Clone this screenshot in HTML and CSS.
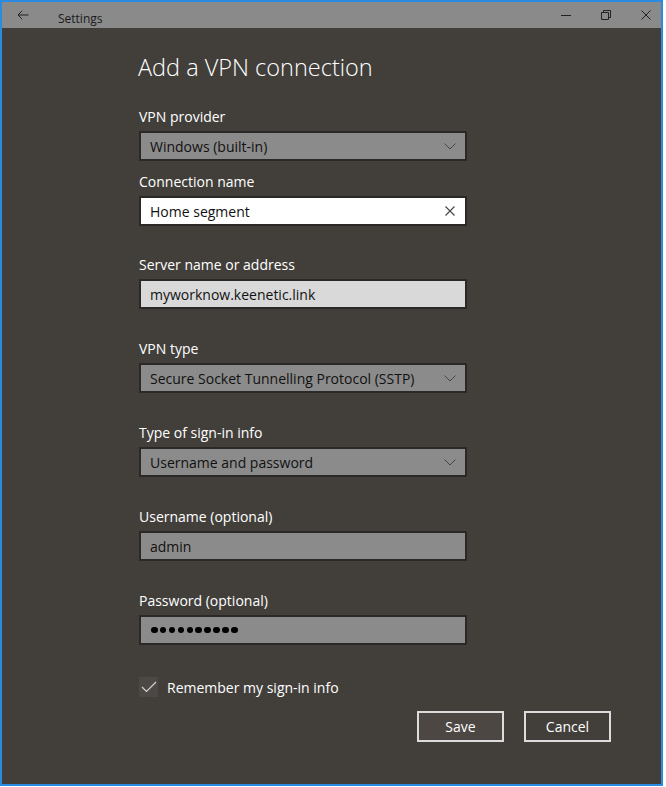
FILE: index.html
```html
<!DOCTYPE html>
<html lang="en">
<head>
  <meta charset="UTF-8" />
  <meta name="viewport" content="width=device-width, initial-scale=1.0" />
  <title>Add a VPN connection</title>
  <link rel="stylesheet" href="styles.css">
</head>
<body>
  <div class="window">
    <div class="titlebar">
      <svg class="back" width="12" height="10" viewBox="0 0 12 10"><path d="M11.5 5H1M5.2 0.8L1 5l4.2 4.2" fill="none" stroke="#222" stroke-width="1"/></svg>
      <span class="title">Settings</span>
      <div class="controls">
        <svg width="10" height="10" viewBox="0 0 10 10"><path d="M0 5.5h10" stroke="#222" stroke-width="1"/></svg>
        <svg width="10" height="10" viewBox="0 0 10 10"><path d="M0.5 2.5h7v7h-7zM2.5 2.5V0.5h7v7h-2" fill="none" stroke="#222" stroke-width="1"/></svg>
        <svg width="10" height="10" viewBox="0 0 10 10"><path d="M0.5 0.5l9 9M9.5 0.5l-9 9" stroke="#222" stroke-width="1"/></svg>
      </div>
    </div>

    <div class="content">
      <h1>Add a VPN connection</h1>

      <div class="group">
        <div class="label">VPN provider</div>
        <div class="box select">Windows (built-in)
          <svg class="chev" width="12" height="7" viewBox="0 0 12 7"><path d="M0.5 0.5L6 6l5.5-5.5" fill="none" stroke="#444" stroke-width="1"/></svg>
        </div>
      </div>

      <div class="group near">
        <div class="label">Connection name</div>
        <div class="box focus">Home segment
          <svg class="clear" width="10" height="10" viewBox="0 0 10 10"><path d="M0.5 0.5l9 9M9.5 0.5l-9 9" stroke="#444" stroke-width="1.1"/></svg>
        </div>
      </div>

      <div class="group first-wide">
        <div class="label">Server name or address</div>
        <div class="box light">myworknow.keenetic.link</div>
      </div>

      <div class="group">
        <div class="label">VPN type</div>
        <div class="box select">Secure Socket Tunnelling Protocol (SSTP)
          <svg class="chev" width="12" height="7" viewBox="0 0 12 7"><path d="M0.5 0.5L6 6l5.5-5.5" fill="none" stroke="#444" stroke-width="1"/></svg>
        </div>
      </div>

      <div class="group">
        <div class="label">Type of sign-in info</div>
        <div class="box select">Username and password
          <svg class="chev" width="12" height="7" viewBox="0 0 12 7"><path d="M0.5 0.5L6 6l5.5-5.5" fill="none" stroke="#444" stroke-width="1"/></svg>
        </div>
      </div>

      <div class="group">
        <div class="label">Username (optional)</div>
        <div class="box">admin</div>
      </div>

      <div class="group">
        <div class="label">Password (optional)</div>
        <div class="box">
          <span class="dots"><i></i><i></i><i></i><i></i><i></i><i></i><i></i><i></i><i></i><i></i></span>
        </div>
      </div>

      <div class="check-row">
        <span class="check">
          <svg width="16" height="12" viewBox="0 0 16 12"><path d="M1 6l4.5 4.5L15 1" fill="none" stroke="#d4d4d4" stroke-width="1.2"/></svg>
        </span>
        <span>Remember my sign-in info</span>
      </div>

      <div class="actions">
        <button class="btn save">Save</button>
        <button class="btn">Cancel</button>
      </div>
    </div>
  </div>
</body>
</html>
```

FILE: styles.css
```css
body {
  margin: 0;
  background: #fff;
  font-family: 'Open Sans', 'Noto Sans', sans-serif;
}
.window {
  width: 663px;
  height: 786px;
  box-sizing: border-box;
  border: 2px solid #2a8be0;
  background: #423f3b;
  display: flex;
  flex-direction: column;
}
.titlebar {
  height: 26px;
  background: #8a8a8a;
  display: flex;
  align-items: center;
  color: #1a1a1a;
  font-size: 12px;
}
.back {
  margin-left: 15px;
  margin-top: 0;
}
.title {
  margin-left: 29px;
  margin-top: 6px;
}
.controls {
  margin-left: auto;
  display: flex;
  gap: 30px;
  margin-right: 10px;
}
.content {
  padding: 23px 0 0 136px;
  color: #fff;
  font-size: 14px;
}
h1 {
  margin: 0;
  font-size: 23.5px;
  font-weight: 300;
  line-height: 32px;
}
.group {
  margin-top: 30px;
  padding-left: 1px;
}
.group:first-of-type {
  margin-top: 24px;
}
.group.near {
  margin-top: 11px;
}
.group.first-wide {
  margin-top: 29px;
}
.label {
  line-height: 20px;
  margin-bottom: 4px;
}
.box {
  width: 328px;
  height: 30px;
  box-sizing: border-box;
  border: 2px solid #2a2928;
  background: #8b8b8b;
  color: #111;
  padding: 0 9px;
  display: flex;
  align-items: center;
}
.box.focus {
  background: #fff;
}
.box.light {
  background: #d9d9d9;
}
.chev {
  margin-left: auto;
}
.clear {
  margin-left: auto;
  margin-right: 1px;
}
.dots {
  display: flex;
  gap: 2.4px;
  margin-left: 1px;
}
.dots i {
  width: 6.5px;
  height: 6.5px;
  border-radius: 50%;
  background: #000;
}
.check-row {
  margin-top: 32px;
  padding-left: 1px;
  display: flex;
  align-items: center;
  gap: 9px;
  height: 20px;
}
.check {
  width: 19px;
  height: 20px;
  background: #4b4845;
  display: flex;
  align-items: center;
  justify-content: center;
}
.actions {
  width: 473px;
  margin-top: 14px;
  display: flex;
  justify-content: flex-end;
  gap: 20px;
}
.btn {
  width: 87px;
  height: 31px;
  border: 2px solid #dcdcdc;
  background: #423f3b;
  color: #fff;
  font-family: inherit;
  font-size: 14px;
  padding: 0;
}
.btn.save {
  background: #4c4743;
}
```
